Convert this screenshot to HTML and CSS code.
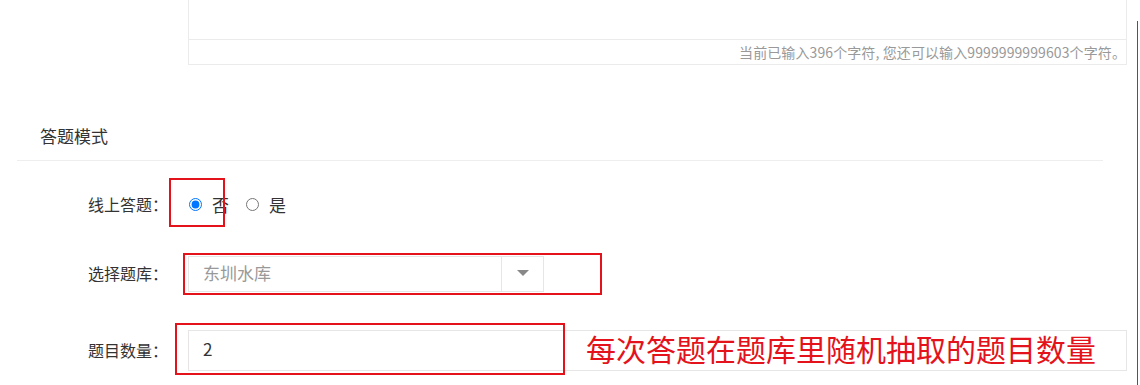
FILE: index.html
```html
<!DOCTYPE html>
<html lang="zh-CN">
<head>
    <meta charset="UTF-8">
    <meta name="viewport" content="width=device-width, initial-scale=1.0">
    <title>答题模式</title>
    <link rel="stylesheet" href="styles.css">
</head>
<body>
    <div class="page">
        <!-- 编辑器底部 -->
        <div class="editor-box">
            <div class="editor-area"></div>
            <div class="editor-count">当前已输入396个字符, 您还可以输入9999999999603个字符。</div>
        </div>

        <div class="section-head">
            <span class="section-title">答题模式</span>
        </div>

        <div class="form-row row-online">
            <label class="form-label">线上答题：</label>
            <div class="form-control radio-group">
                <label class="radio-item"><input type="radio" name="online" checked> 否</label>
                <label class="radio-item"><input type="radio" name="online"> 是</label>
            </div>
            <div class="mark mark-radio"></div>
        </div>

        <div class="form-row row-bank">
            <label class="form-label">选择题库：</label>
            <div class="form-control select-box">
                <span class="select-text">东圳水库</span>
                <span class="select-btn"><i class="caret"></i></span>
            </div>
            <div class="mark mark-select"></div>
        </div>

        <div class="form-row row-count">
            <label class="form-label">题目数量：</label>
            <div class="form-control input-box">2</div>
            <div class="mark mark-input"></div>
            <div class="mark-note">每次答题在题库里随机抽取的题目数量</div>
        </div>
    </div>
    <div class="edge-line"></div>
</body>
</html>
```

FILE: styles.css
```css
body {
    margin: 0;
    padding: 0;
    background: #fff;
    color: #333;
    font-family: "Noto Sans CJK SC", "Noto Sans", sans-serif;
    overflow: hidden;
}

.page {
    position: relative;
    width: 1140px;
    height: 385px;
}

.editor-box {
    margin-left: 188px;
    width: 939px;
    box-sizing: border-box;
    border: 1px solid #ebebeb;
    border-top: none;
}

.editor-area {
    height: 39px;
    border-bottom: 1px solid #ebebeb;
}

.editor-count {
    height: 24px;
    line-height: 24px;
    font-size: 14px;
    letter-spacing: 0.1px;
    color: #999;
    text-align: right;
    padding-right: 0;
    white-space: nowrap;
}

.section-head {
    margin: 48px 37px 0 17px;
    height: 47px;
    line-height: 46px;
    padding-left: 23px;
    border-bottom: 1px solid #eeeeee;
}

.section-title {
    font-size: 17px;
    color: #333;
}

.form-row {
    position: relative;
    display: flex;
    align-items: center;
}

.row-online { margin-top: 26px; height: 36px; }
.row-bank { margin-top: 33px; height: 36px; }
.row-count { margin-top: 38px; height: 41px; }

.form-label {
    width: 168px;
    text-align: right;
    font-size: 16px;
    color: #333;
    flex-shrink: 0;
    position: relative;
    top: -1px;
}

.form-control {
    margin-left: 20px;
    box-sizing: border-box;
}

.radio-group {
    display: flex;
    align-items: center;
    gap: 16px;
    font-size: 17px;
    position: relative;
    top: -1px;
}

.radio-item {
    display: flex;
    align-items: center;
    gap: 10px;
}

.radio-item input {
    margin: 1px 0 0 1px;
    width: 13px;
    height: 13px;
}

.select-box {
    width: 356px;
    height: 36px;
    border: 1px solid #e6e6e6;
    display: flex;
    align-items: stretch;
}

.select-text {
    flex: 1;
    padding-left: 14px;
    line-height: 31px;
    font-size: 17px;
    color: #999;
}

.select-btn {
    width: 41px;
    border-left: 1px solid #e6e6e6;
    display: flex;
    align-items: center;
    justify-content: center;
}

.caret {
    width: 0;
    height: 0;
    border-left: 6px solid transparent;
    border-right: 6px solid transparent;
    border-top: 6px solid #888;
    margin-top: -2px;
}

.input-box {
    width: 939px;
    height: 41px;
    border: 1px solid #e6e6e6;
    padding-left: 14px;
    line-height: 36px;
    font-size: 17px;
    color: #333;
}

/* 标注 */
.mark {
    position: absolute;
    border: 2px solid #e3121b;
    box-sizing: border-box;
}

.mark-radio { left: 169px; top: -9px; width: 56px; height: 49px; }
.mark-select { left: 183px; top: -3px; width: 419px; height: 42px; }
.mark-input { left: 175px; top: -7px; width: 390px; height: 52px; }

.mark-note {
    position: absolute;
    left: 586px;
    top: -2px;
    line-height: 41px;
    font-size: 30px;
    color: #e3121b;
    white-space: nowrap;
}

.edge-line {
    position: fixed;
    top: 21px;
    left: 1137px;
    width: 1px;
    bottom: 0;
    background: #555;
}
```
